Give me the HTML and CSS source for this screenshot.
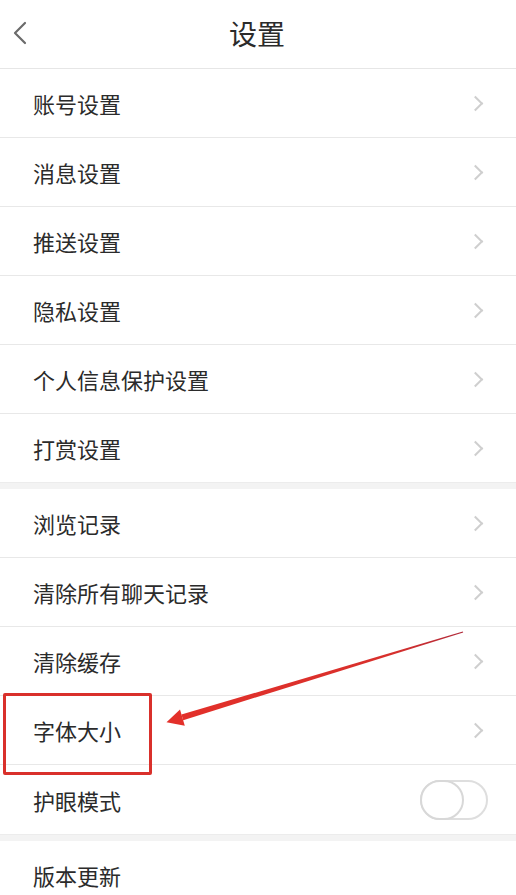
FILE: index.html
```html
<!DOCTYPE html>
<html lang="zh-CN">
<head>
<meta charset="utf-8">
<title>设置</title>
<link rel="stylesheet" href="styles.css">
</head>
<body>
<div class="page">
  <header class="topbar">
    <svg class="back" width="16" height="24" viewBox="0 0 16 24"><path d="M13 2 L3 12 L13 22" fill="none" stroke="#6b6b6b" stroke-width="2.2" stroke-linecap="round" stroke-linejoin="round"/></svg>
    <h1 class="title">设置</h1>
  </header>
  <section class="group">
    <div class="row"><span class="label">账号设置</span><span class="chev"></span></div>
    <div class="row"><span class="label">消息设置</span><span class="chev"></span></div>
    <div class="row"><span class="label">推送设置</span><span class="chev"></span></div>
    <div class="row"><span class="label">隐私设置</span><span class="chev"></span></div>
    <div class="row"><span class="label">个人信息保护设置</span><span class="chev"></span></div>
    <div class="row"><span class="label">打赏设置</span><span class="chev"></span></div>
  </section>
  <section class="group">
    <div class="row"><span class="label">浏览记录</span><span class="chev"></span></div>
    <div class="row"><span class="label">清除所有聊天记录</span><span class="chev"></span></div>
    <div class="row"><span class="label">清除缓存</span><span class="chev"></span></div>
    <div class="row"><span class="label">字体大小</span><span class="chev"></span></div>
    <div class="row tall"><span class="label">护眼模式</span><span class="toggle"><span class="knob"></span></span></div>
  </section>
  <section class="group">
    <div class="row"><span class="label">版本更新</span></div>
  </section>

  <div class="highlight"></div>
  <svg class="arrow" width="516" height="895" viewBox="0 0 516 895">
    <defs>
      <linearGradient id="ag" x1="463" y1="632" x2="170" y2="722" gradientUnits="userSpaceOnUse">
        <stop offset="0" stop-color="#b02a3a"/>
        <stop offset="0.25" stop-color="#d8302c"/>
        <stop offset="1" stop-color="#e3302a"/>
      </linearGradient>
    </defs>
    <polygon points="463.2,632.4 462.8,631.4 181.4,714.6 183.2,720.2" fill="url(#ag)"/>
    <polygon points="166.5,722.2 180,709.4 184.8,725.8" fill="#e3302a"/>
  </svg>
</div>
</body>
</html>
```
FILE: styles.css
```css
* { box-sizing: border-box; }
html, body { margin: 0; padding: 0; background: #fff; }
body {
  font-family: "Noto Sans CJK SC", "Noto Sans", sans-serif;
  color: #2b2b2b;
  width: 516px;
  height: 895px;
  overflow: hidden;
}
.page { position: relative; width: 516px; height: 895px; }
.topbar {
  height: 69px;
  border-bottom: 1px solid #e6e6e6;
  display: flex;
  align-items: center;
  justify-content: center;
  position: relative;
}
.back { position: absolute; left: 12px; top: 21px; }
.title {
  margin: 0;
  font-size: 28px;
  font-weight: 400;
  line-height: 1;
  color: #2b2b2b;
  position: relative;
  top: -1px;
  left: -1px;
}
.group { border-bottom: 6px solid #f3f3f3; }
.group:last-of-type { border-bottom: 0; }
.row {
  height: 69px;
  border-bottom: 1px solid #e8e8e8;
  display: flex;
  align-items: center;
  justify-content: space-between;
  padding: 0 31px 0 33px;
}
.row.tall { height: 70px; }
.group .row:last-child { border-bottom: 1px solid #ececec; }
.label { font-size: 22px; line-height: 1; }
.chev {
  width: 11px;
  height: 11px;
  border-top: 2px solid #cfcfcf;
  border-right: 2px solid #cfcfcf;
  transform: rotate(45deg);
  margin-right: 4px;
}
.toggle {
  position: relative;
  width: 68px;
  height: 40px;
  border: 2px solid #dedede;
  border-radius: 20px;
  margin-right: -3px;
}
.knob {
  position: absolute;
  left: -2px;
  top: -2px;
  width: 44px;
  height: 40px;
  border: 2px solid #d8d8d8;
  border-radius: 20px;
  background: #fff;
}
.highlight {
  position: absolute;
  left: 3px;
  top: 693px;
  width: 149px;
  height: 82px;
  border: 3px solid #d9302b;
  border-radius: 2px;
}
.arrow { position: absolute; left: 0; top: 0; pointer-events: none; }
```
